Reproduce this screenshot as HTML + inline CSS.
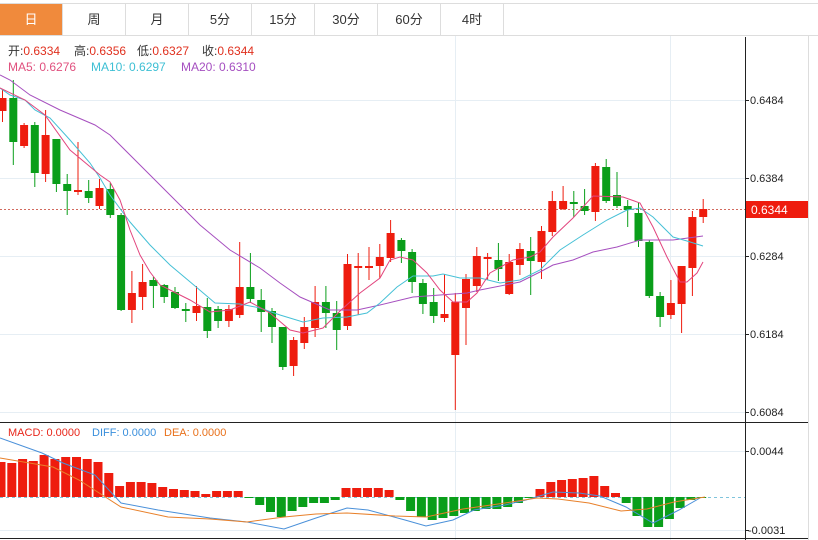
<!DOCTYPE html>
<html><head><meta charset="utf-8"><style>
body{margin:0;background:#fff;width:818px;height:540px;overflow:hidden;font-family:"Liberation Sans","Noto Sans CJK SC",sans-serif}
svg{position:absolute;left:0;top:0}
</style></head><body>
<svg id="s" width="818" height="540" xmlns="http://www.w3.org/2000/svg" font-family="Liberation Sans, Noto Sans CJK SC, sans-serif">
<rect x="0" y="3" width="62" height="32" fill="#f08a3c"/>
<line x1="0" y1="3.5" x2="818" y2="3.5" stroke="#ddd"/>
<line x1="0" y1="35.5" x2="818" y2="35.5" stroke="#ddd"/>
<g stroke="#ddd"><line x1="62.5" y1="3" x2="62.5" y2="35"/><line x1="125.5" y1="3" x2="125.5" y2="35"/><line x1="188.5" y1="3" x2="188.5" y2="35"/><line x1="251.5" y1="3" x2="251.5" y2="35"/><line x1="314.5" y1="3" x2="314.5" y2="35"/><line x1="377.5" y1="3" x2="377.5" y2="35"/><line x1="440.5" y1="3" x2="440.5" y2="35"/><line x1="503.5" y1="3" x2="503.5" y2="35"/><line x1="808.5" y1="35" x2="808.5" y2="540"/></g>
<g font-size="13" text-anchor="middle" fill="#333"><text x="31" y="24" fill="#fff">日</text><text x="94" y="24">周</text><text x="157" y="24">月</text><text x="220" y="24">5分</text><text x="283" y="24">15分</text><text x="346" y="24">30分</text><text x="409" y="24">60分</text><text x="472" y="24">4时</text></g>
<g stroke="#e6eef4"><line x1="0" y1="100.5" x2="746" y2="100.5"/><line x1="0" y1="178.5" x2="746" y2="178.5"/><line x1="0" y1="256.5" x2="746" y2="256.5"/><line x1="0" y1="334.5" x2="746" y2="334.5"/><line x1="0" y1="412.5" x2="746" y2="412.5"/><line x1="455.5" y1="36" x2="455.5" y2="540"/><line x1="670.5" y1="36" x2="670.5" y2="540"/><line x1="0" y1="451.5" x2="746" y2="451.5"/><line x1="0" y1="530.5" x2="746" y2="530.5"/></g>
<line x1="0" y1="422.5" x2="808" y2="422.5" stroke="#222"/>
<line x1="0" y1="538.5" x2="808" y2="538.5" stroke="#222"/>
<line x1="745.5" y1="37" x2="745.5" y2="540" stroke="#222"/>
<g stroke="#222"><line x1="745" y1="100.5" x2="749" y2="100.5"/><line x1="745" y1="178.5" x2="749" y2="178.5"/><line x1="745" y1="256.5" x2="749" y2="256.5"/><line x1="745" y1="334.5" x2="749" y2="334.5"/><line x1="745" y1="412.5" x2="749" y2="412.5"/><line x1="745" y1="451.5" x2="749" y2="451.5"/><line x1="745" y1="530.5" x2="749" y2="530.5"/></g>
<g font-size="11" fill="#222"><text x="750" y="104">0.6484</text><text x="750" y="182">0.6384</text><text x="750" y="260">0.6284</text><text x="750" y="338">0.6184</text><text x="750" y="416">0.6084</text><text x="750" y="455">0.0044</text><text x="748" y="534">-0.0031</text></g>
<line x1="0" y1="209.5" x2="745" y2="209.5" stroke="#c43a2a" stroke-dasharray="2,2" stroke-width="0.8"/>
<line x1="0" y1="497.5" x2="745" y2="497.5" stroke="#7fc4dc" stroke-dasharray="3,3"/>
<rect x="746" y="201" width="62" height="17" fill="#ee1c0e"/>
<text x="751" y="214" font-size="12" fill="#fff">0.6344</text>
<g font-size="12"><text x="8" y="55" fill="#333">开:<tspan fill="#e0301e">0.6334</tspan></text><text x="74" y="55" fill="#333">高:<tspan fill="#e0301e">0.6356</tspan></text><text x="137" y="55" fill="#333">低:<tspan fill="#e0301e">0.6327</tspan></text><text x="202" y="55" fill="#333">收:<tspan fill="#e0301e">0.6344</tspan></text>
<text x="8" y="71" fill="#e0507e">MA5: 0.6276</text><text x="91" y="71" fill="#3dbfd4">MA10: 0.6297</text><text x="181" y="71" fill="#a54fc0">MA20: 0.6310</text></g>
<g font-size="11"><text x="8" y="436" fill="#e8261a">MACD: 0.0000</text><text x="92" y="436" fill="#3a8fdc">DIFF: 0.0000</text><text x="164" y="436" fill="#e8701a">DEA: 0.0000</text></g>
<g id="c"></g>
</svg>
<script>
var C=[[98,111,89,122,1],[98,142,80,165,0],[125,146,123,148,1],[125,173,122,187,0],[135,174,110,182,1],[139,184,139,192,0],[184,191,174,215,0],[190,191,142,195,1],[191,198,180,203,0],[188,206,179,209,1],[189,215,183,218,0],[215,310,213,311,0],[293,310,271,323,1],[282,297,264,310,1],[280,286,277,308,0],[285,297,284,303,0],[292,308,287,309,0],[309,311,303,322,0],[306,313,286,321,1],[307,331,298,338,0],[309,321,306,328,0],[309,321,305,327,1],[287,315,242,318,1],[287,299,253,303,0],[300,312,289,332,0],[311,327,308,343,0],[327,367,327,370,0],[340,366,337,376,1],[327,343,317,349,1],[302,328,286,337,1],[302,313,286,328,0],[313,330,301,350,0],[264,326,254,330,1],[266,268,253,315,1],[266,267,247,280,1],[257,266,244,278,1],[233,258,220,262,1],[240,251,238,263,0],[252,282,249,293,0],[283,304,279,314,0],[302,316,288,323,0],[314,318,274,322,1],[302,355,293,410,1],[279,308,274,345,1],[256,286,247,292,1],[257,259,253,280,1],[260,269,243,281,0],[262,294,254,295,1],[249,265,243,275,1],[251,261,237,295,0],[231,262,226,279,1],[201,232,191,236,1],[201,209,186,210,1],[202,203,191,217,0],[206,211,189,215,0],[166,212,163,221,1],[167,201,159,203,0],[195,206,172,208,0],[206,210,200,227,0],[213,241,203,247,0],[242,296,240,298,0],[296,317,292,327,0],[303,315,280,319,1],[266,304,266,333,1],[217,268,211,296,1],[209,217,199,223,1]];
var M=[462,463,459,461,455,459,457,457,459,462,473,486,482,482,483,487,489,490,491,494,491,491,491,498,505,512,517,511,507,503,503,500,488,488,488,488,490,500,511,517,520,518,516,513,511,509,509,507,503,498,489,482,480,479,478,476,486,493,503,516,527,527,519,508,500,497];
var R="#ee1c0e",G="#0a9e1a",h="";
for(var i=0;i<M.length;i++){var x=1.5+i*10.78,z=497,t=M[i];var y=Math.min(t,z),hh=Math.max(1,Math.abs(t-z));h+='<rect x="'+(x-5).toFixed(1)+'" y="'+y+'" width="9" height="'+hh+'" fill="'+(t<z?R:G)+'"/>';}
function pl(p,c){return '<polyline fill="none" stroke="'+c+'" stroke-width="1" points="'+p+'"/>';}
h+=pl("0,438 42,453 63,463 95,475 121,503 158,510 210,518 247,522 284,529 316,518 347,508 368,510 405,520 426,526 453,520 474,510 505,505 526,500 553,492 579,493 600,496 626,507 653,523 679,510 700,498","#4a90d9");
h+=pl("0,458 53,467 79,480 121,507 168,517 210,519 247,522 284,517 316,514 347,513 395,516 426,517 463,509 505,503 537,498 558,499 589,503 621,511 647,509 674,502 705,497","#e8802a");
for(var i=0;i<C.length;i++){var c=C[i],x=2.5+i*10.78,col=c[4]?R:G;h+='<line x1="'+x.toFixed(1)+'" y1="'+c[2]+'" x2="'+x.toFixed(1)+'" y2="'+c[3]+'" stroke="'+col+'"/>';h+='<rect x="'+(x-4).toFixed(1)+'" y="'+c[0]+'" width="8" height="'+Math.max(2,c[1]-c[0])+'" fill="'+col+'"/>';}
h+=pl("0,75 10,80 30,95 60,110 95,125 110,135 140,165 170,195 200,225 230,250 260,268 280,283 300,297 330,310 357,310 380,305 413,297 467,293 480,290 520,282 540,272 553,265 573,260 593,252 617,247 640,240 673,240 703,236","#a64fbf");
h+=pl("0,88 10,95 25,100 35,110 50,118 70,140 90,163 100,178 110,195 130,222 150,245 170,265 195,286 215,303 240,304 260,308 280,315 303,322 323,318 347,317 367,313 380,303 397,287 413,276 433,276 443,274 460,278 480,278 500,283 520,280 540,270 560,250 583,235 607,220 627,210 640,208 653,217 673,237 687,241 703,246","#45c0d6");
h+=pl("0,88 25,100 45,115 70,150 100,175 110,182 120,200 130,230 140,255 150,272 160,285 190,300 210,312 230,310 250,302 270,313 290,330 303,333 323,328 340,311 360,293 380,278 390,260 400,257 413,260 427,273 440,290 453,302 467,302 477,293 490,273 513,260 530,257 540,252 553,237 573,218 593,196 623,197 640,203 653,227 667,257 680,282 687,282 697,273 703,262","#e2457e");
document.getElementById("c").innerHTML=h;
</script>
</body></html>
